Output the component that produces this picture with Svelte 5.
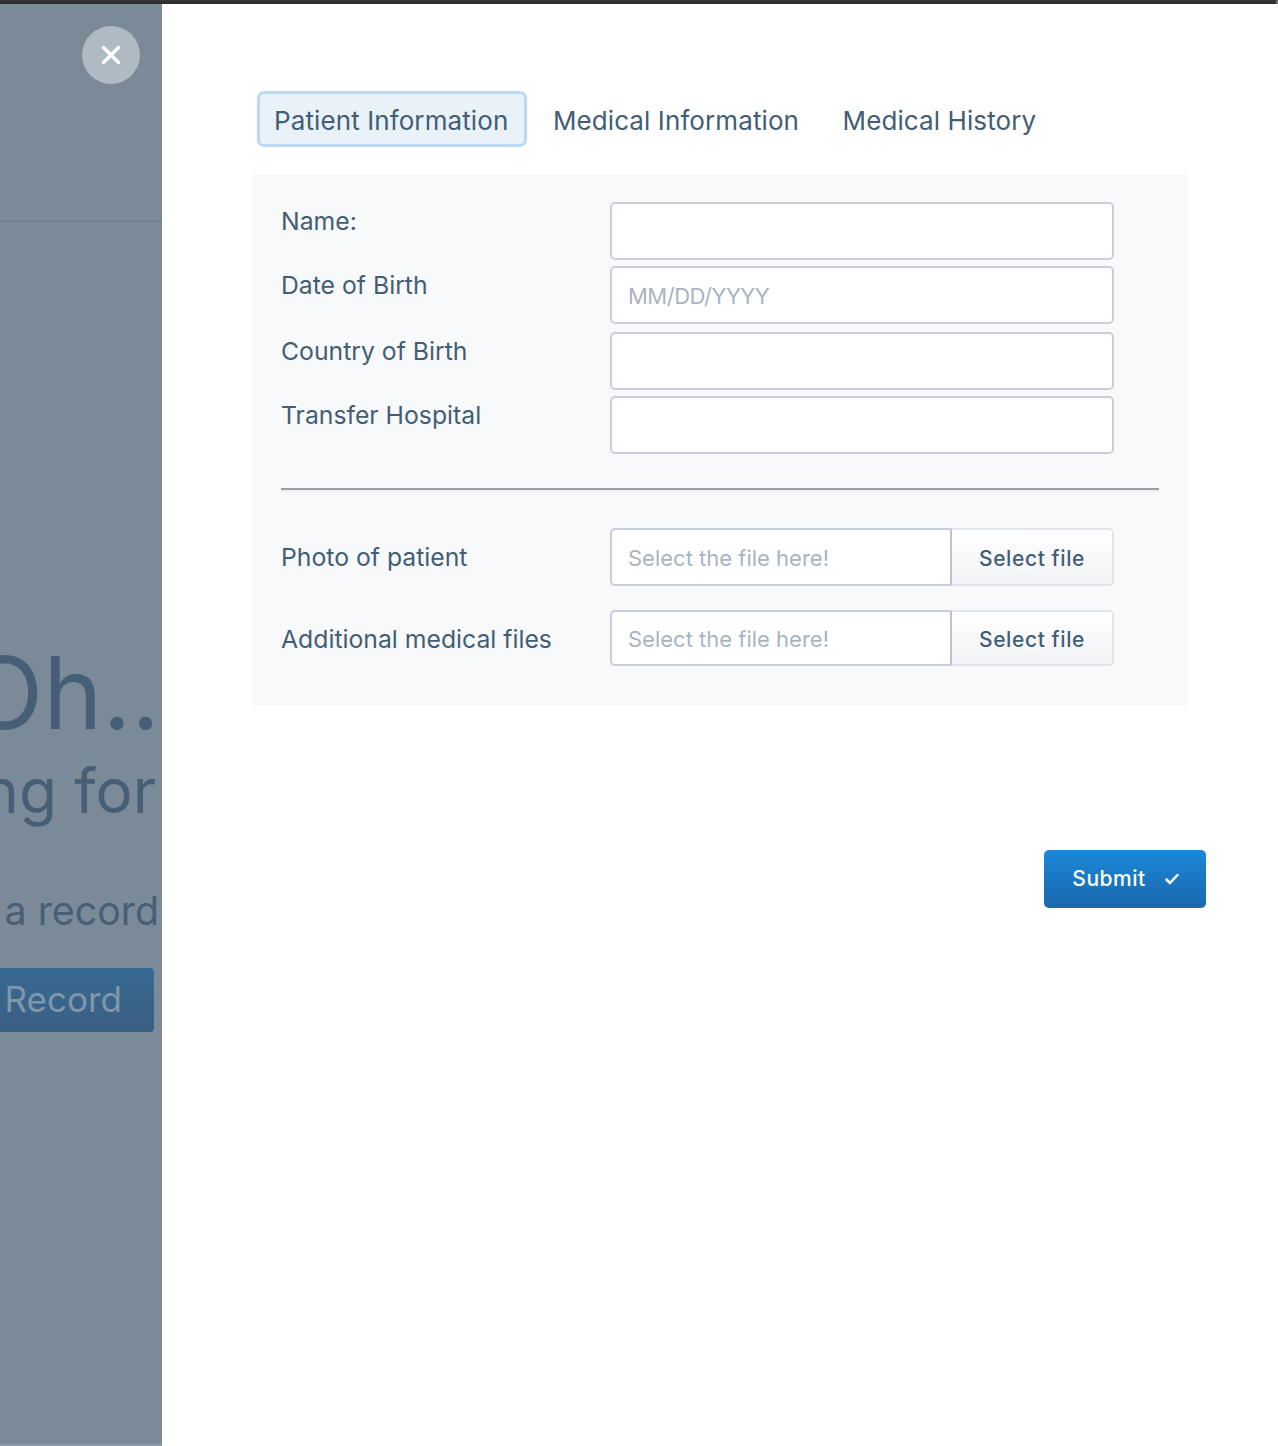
<script>
	let tabs = ['Patient Information', 'Medical Information', 'Medical History'];
	let active = 0;
	let fields = [
		{ label: 'Name:', placeholder: '' },
		{ label: 'Date of Birth', placeholder: 'MM/DD/YYYY', date: true },
		{ label: 'Country of Birth', placeholder: '', wide: true },
		{ label: 'Transfer Hospital', placeholder: '' }
	];
	let files = ['Photo of patient', 'Additional medical files'];
</script>

<div class="page">
	<div class="topbar"></div>
	<div class="main">
		<aside class="backdrop">
			<div class="back-header"></div>
			<div class="back-line oh"><span>Oh..</span></div>
			<div class="back-line looking"><span>Looking for</span></div>
			<div class="back-line create"><span>Create a record</span></div>
			<div class="back-line"><span class="back-btn">New Record</span></div>
			<button class="close" aria-label="Close">
				<svg width="22" height="22" viewBox="0 0 22 22">
					<path d="M3.500 3.500 18.500 18.500 M18.500 3.500 3.500 18.500" stroke="#fff" stroke-width="3.500" stroke-linecap="round" />
				</svg>
			</button>
		</aside>

		<section class="panel">
			<nav class="tabs">
				{#each tabs as tab, i}
					<button class="tab" class:active={i == active} on:click={() => (active = i)}>{tab}</button>
				{/each}
			</nav>

			<form class="form" on:submit|preventDefault>
				{#each fields as field}
					<div class="row" class:wide={field.wide}>
						<label for={field.label}>{field.label}</label>
						<input id={field.label} class="input" class:date={field.date} type="text" placeholder={field.placeholder} />
					</div>
				{/each}

				<hr />

				{#each files as file, i}
					<div class="row file" class:second={i == 1}>
						<label for={file}>{file}</label>
						<div class="file-group">
							<input id={file} class="input" type="text" placeholder="Select the file here!" />
							<button type="button" class="select">Select file</button>
						</div>
					</div>
				{/each}
			</form>

			<div class="actions">
				<button class="submit">
					<span class="submit-text">Submit</span>
					<svg width="14" height="12" viewBox="0 0 14 12">
						<path d="M1.500 6.500 5 10 12.500 2" fill="none" stroke="#fff" stroke-width="2.500" stroke-linecap="round" stroke-linejoin="round" />
					</svg>
				</button>
			</div>
		</section>
	</div>
</div>

<style>
	:global(body) {
		margin: 0;
		font-family: Inter, 'Noto Sans', sans-serif;
		color: #435d75;
	}

	.page {
		height: 1446px;
		display: flex;
		flex-direction: column;
		overflow: hidden;
		background: #fff;
	}

	.topbar {
		height: 4px;
		flex: none;
		background: #2e2e30;
		border-top: 1px solid #3a3a3c;
		border-right: 2px solid #77777a;
		box-sizing: border-box;
	}

	.main {
		flex: 1;
		display: flex;
		min-height: 0;
	}

	.backdrop {
		position: relative;
		width: 162px;
		flex: none;
		overflow: hidden;
		background: #7b8a99;
		color: #465f76;
		box-sizing: border-box;
		border-bottom: 2px solid #8f9aab;
	}

	.back-header {
		height: 216px;
		border-bottom: 2px solid #72818f;
		margin-bottom: 412px;
	}

	.back-line {
		display: flex;
		justify-content: flex-end;
		white-space: nowrap;
	}

	.oh {
		padding-right: 2px;
		font-size: 100px;
		line-height: 118px;
		font-weight: 400;
	}

	.looking {
		padding-right: 6px;
		font-size: 62px;
		line-height: 78px;
		font-weight: 400;
	}

	.create {
		margin-top: 53px;
		margin-bottom: 29px;
		padding-right: 3px;
		font-size: 39.300px;
		line-height: 56px;
	}

	.back-btn {
		display: block;
		margin-right: 8px;
		padding: 0 32px;
		height: 64px;
		line-height: 62px;
		font-size: 35px;
		color: #7f96ab;
		border-radius: 4px;
		background: linear-gradient(#386a92, #3a5f84);
	}

	.close {
		position: absolute;
		left: 82px;
		top: 22px;
		width: 58px;
		height: 58px;
		padding: 0;
		border: 0;
		border-radius: 50%;
		background: #b0bac3;
		display: flex;
		align-items: center;
		justify-content: center;
	}

	.panel {
		flex: 1;
		min-width: 0;
		padding: 87px 90px 0;
		background: #fff;
	}

	.tabs {
		display: flex;
		height: 56px;
		padding-left: 5px;
	}

	.tab {
		font: inherit;
		font-size: 26px;
		letter-spacing: 0.1px;
		color: inherit;
		background: none;
		border: 3px solid transparent;
		border-radius: 7px;
		padding: 2px 14.500px 0 14px;
		margin-right: 9px;
		white-space: nowrap;
	}

	.tab.active {
		padding-right: 15.500px;
		background: #e9f1f9;
		border-color: #bcd9f0;
	}

	.form {
		width: 936px;
		box-sizing: border-box;
		margin-top: 27px;
		padding: 28px 29px 40px;
		background: #f8f9fb;
	}

	.row {
		display: flex;
		height: 58px;
		margin-top: 6px;
	}

	.row:first-child {
		margin-top: 0;
	}

	.row.wide {
		margin-top: 8px;
	}

	label {
		width: 329px;
		flex: none;
		font-size: 24.750px;
		line-height: 38px;
	}

	.input {
		width: 504px;
		height: 100%;
		box-sizing: border-box;
		padding: 2px 16px 0;
		border: 2px solid #c8cfd8;
		border-radius: 5px;
		background: #fff;
		font: inherit;
		font-size: 22px;
		outline: 0;
	}

	.input.date {
		letter-spacing: -0.5px;
	}

	.input::placeholder {
		color: #a9b4bf;
		opacity: 1;
	}

	hr {
		height: 2px;
		margin: 34px 0 38px;
		border: 0;
		background: #999da3;
		box-shadow: 0 2px 0 #eef0f3;
	}

	.row.file {
		margin-top: 0;
	}

	.row.file label {
		line-height: 58px;
	}

	.row.file.second {
		height: 56px;
		margin-top: 24px;
	}

	.file-group {
		display: flex;
		width: 504px;
	}

	.file-group .input {
		width: 342px;
		border-right-color: #bcc4ce;
		border-radius: 5px 0 0 5px;
	}

	.select {
		width: 162px;
		padding: 2px 0 0;
		font: inherit;
		font-size: 21px;
		font-weight: 500;
		letter-spacing: 0.6px;
		color: #435d75;
		border: 2px solid #e2e5ea;
		border-left: 0;
		border-radius: 0 5px 5px 0;
		background: linear-gradient(#ffffff, #f2f3f6);
	}

	.actions {
		width: 954px;
		display: flex;
		justify-content: flex-end;
		margin-top: 144px;
	}

	.submit {
		width: 162px;
		height: 58px;
		display: flex;
		align-items: center;
		justify-content: center;
		gap: 19px;
		padding: 0 0 0 1px;
		font: inherit;
		font-size: 21px;
		font-weight: 500;
		letter-spacing: 0.5px;
		color: #fff;
		border: 0;
		border-radius: 5px;
		background: linear-gradient(#1b87d9, #1a68ad);
	}

	.submit-text {
		margin-top: -2px;
	}
</style>
